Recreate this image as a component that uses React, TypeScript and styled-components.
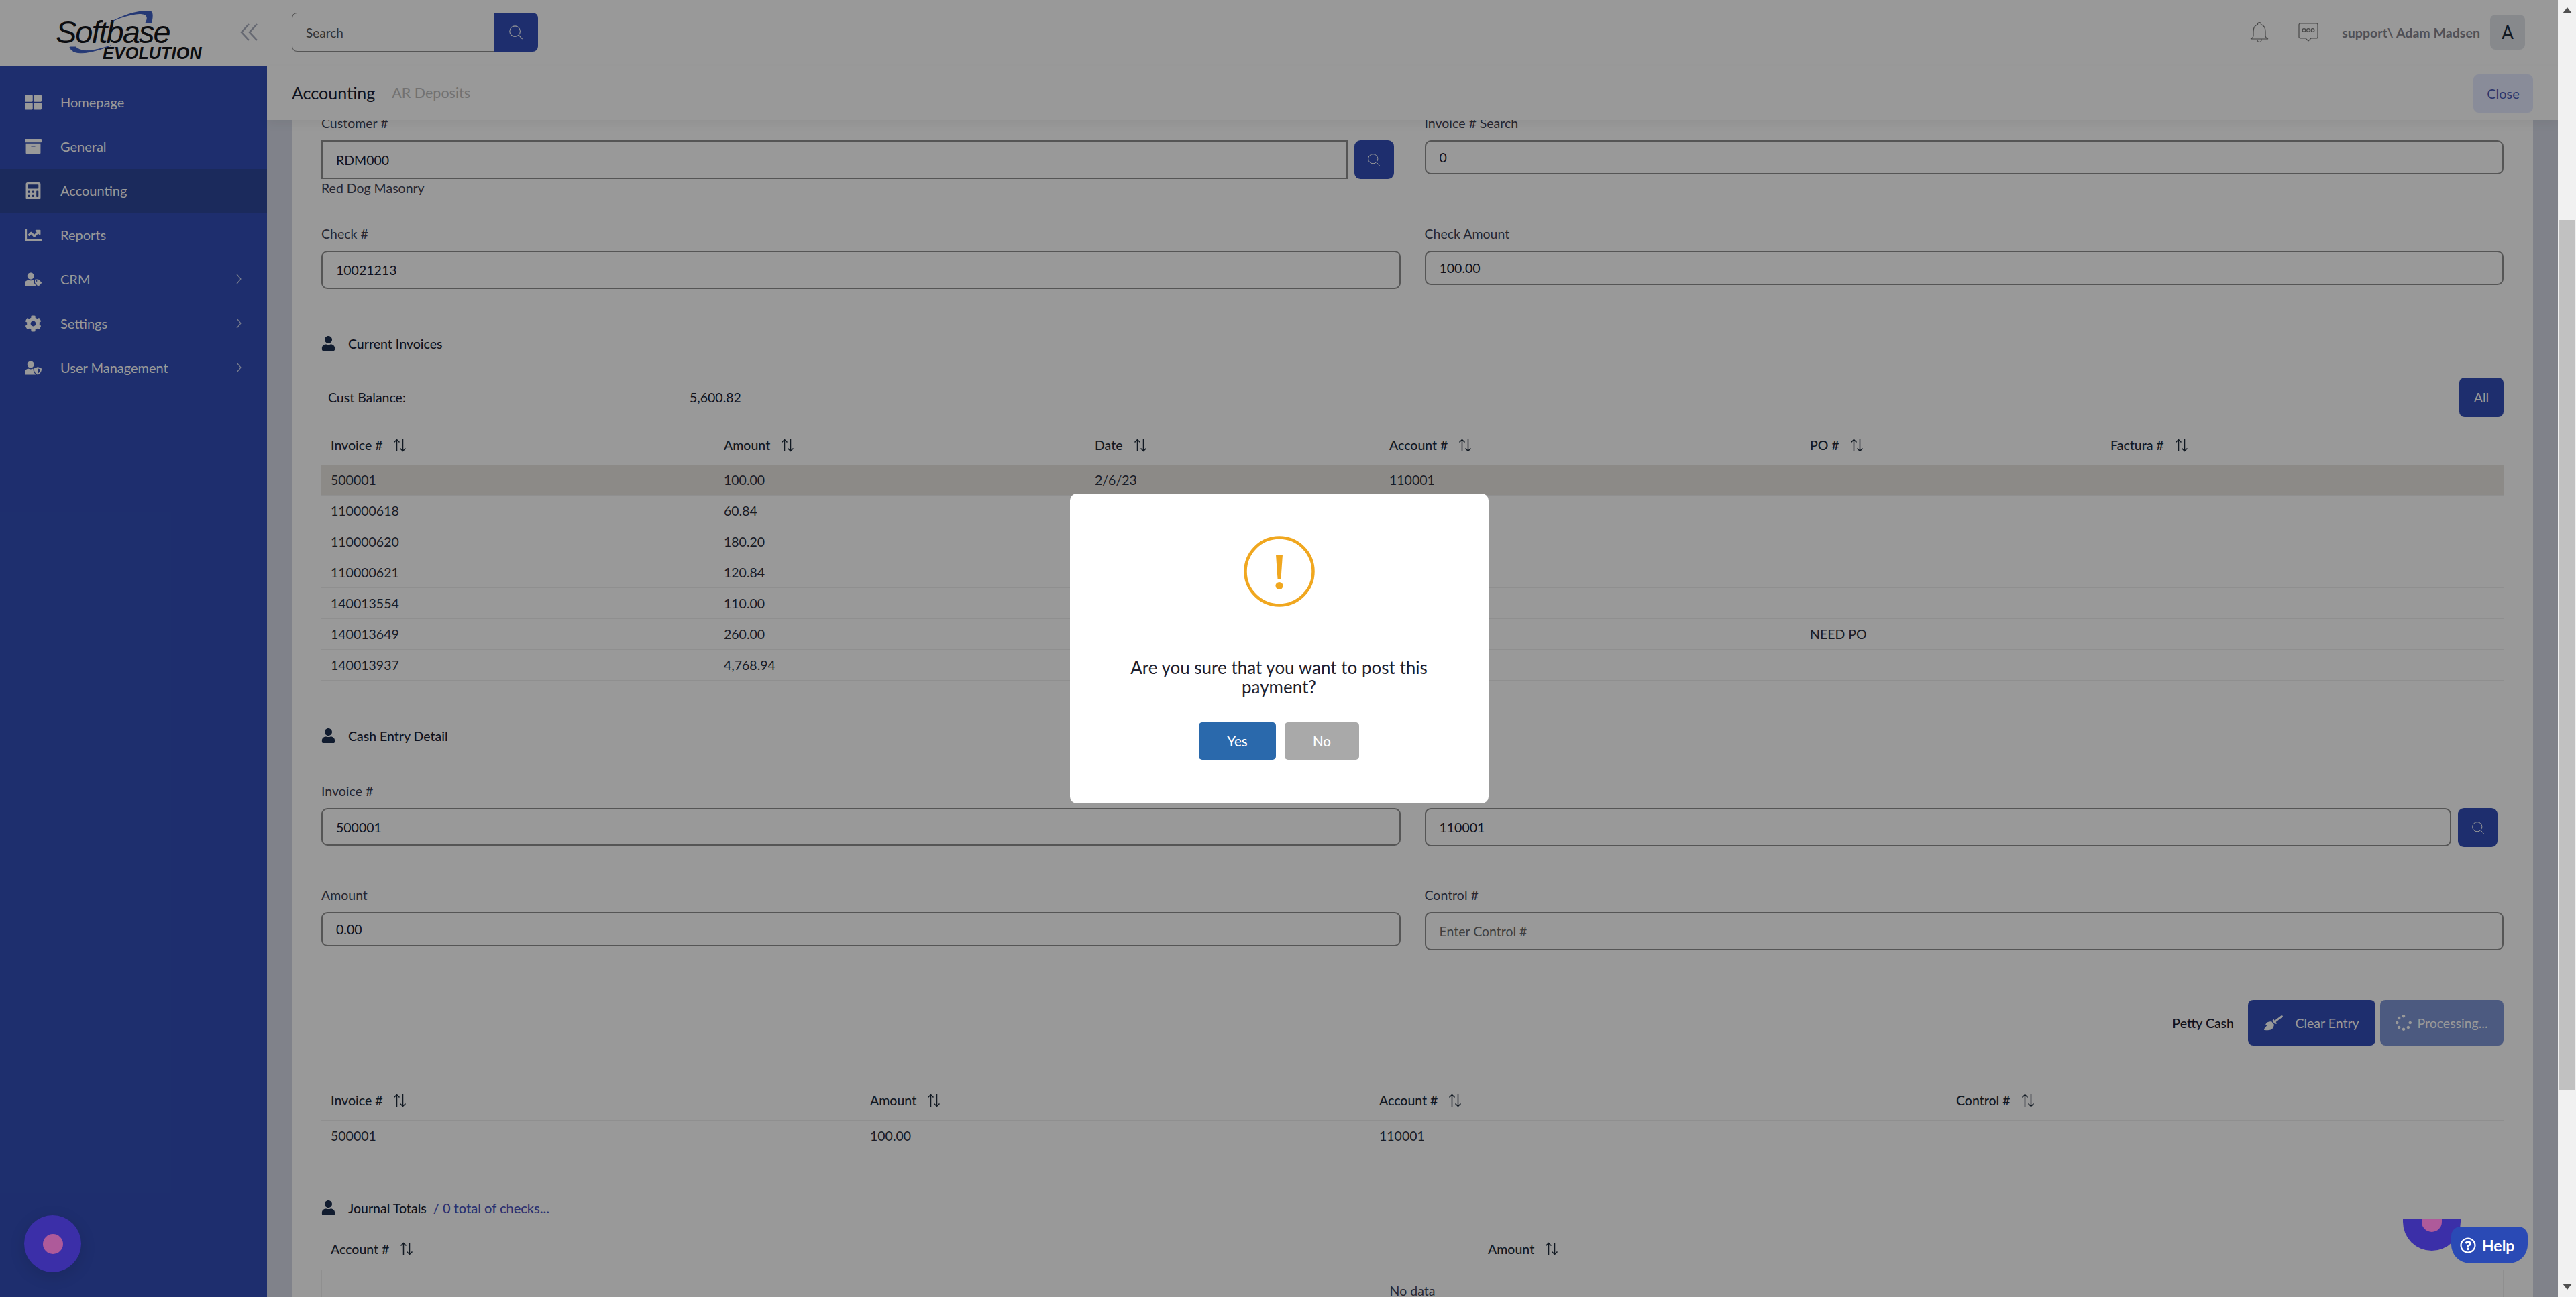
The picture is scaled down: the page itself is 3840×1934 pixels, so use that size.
import React from 'react';
import styled, { createGlobalStyle } from 'styled-components';
import {
  FaThLarge,
  FaArchive,
  FaCalculator,
  FaChartLine,
  FaUserTag,
  FaCog,
  FaUserShield,
  FaUser,
  FaBroom,
  FaSpinner,
  FaRegQuestionCircle,
} from 'react-icons/fa';

const NAVY = '#324eb7';
const FONT = 'Lato, "Noto Sans", "Liberation Sans", sans-serif';

const GlobalStyle = createGlobalStyle`
  html, body { margin: 0; padding: 0; height: 100%; overflow: hidden; }
  body { font-family: ${FONT}; background: #fff; }
  #root { height: 100%; }
  * { box-sizing: border-box; }
`;

const Page = styled.div`
  display: flex;
  width: 3840px;
  height: 1934px;
  overflow: hidden;
`;

const Frame = styled.div`
  position: relative;
  display: grid;
  grid-template-columns: 398px 1fr;
  width: 3813px;
  height: 100%;
  overflow: hidden;
  background: #fff;
`;

const ScrollTrack = styled.div`
  display: flex;
  flex-direction: column;
  align-items: center;
  width: 27px;
  height: 100%;
  background: #f1f1f1;
`;

const ScrollArrow = styled.div<{ $down?: boolean }>`
  width: 0;
  height: 0;
  margin-top: ${(p) => (p.$down ? 'auto' : '11px')};
  margin-bottom: ${(p) => (p.$down ? '11px' : '0')};
  border-left: 7px solid transparent;
  border-right: 7px solid transparent;
  ${(p) => (p.$down ? 'border-top: 9px solid #505050;' : 'border-bottom: 9px solid #505050;')}
`;

const ScrollThumb = styled.div`
  width: 23px;
  height: 1298px;
  margin-top: 308px;
  background: #c1c1c1;
`;

const Sidebar = styled.aside`
  display: flex;
  flex-direction: column;
  height: 100%;
`;

const LogoBar = styled.div`
  position: relative;
  display: flex;
  align-items: flex-start;
  height: 98px;
  padding-left: 83px;
  background: #fff;
`;

const LogoText = styled.div`
  display: flex;
  flex-direction: column;
  padding-top: 28px;
  color: #14161c;
  font-family: "Liberation Sans", sans-serif;
  font-style: italic;
`;

const LogoMain = styled.span`
  font-size: 47px;
  line-height: 40px;
  letter-spacing: -2px;
`;

const LogoSub = styled.span`
  margin-left: 70px;
  font-size: 25px;
  line-height: 22px;
  font-weight: 700;
  letter-spacing: 0.2px;
`;

const LogoSwoosh = styled.svg`
  position: absolute;
  left: 83px;
  top: 0;
`;

const Collapse = styled.svg`
  position: absolute;
  left: 358px;
  top: 34px;
`;

const Nav = styled.nav`
  flex: 1;
  padding-top: 22px;
  background: ${NAVY};
`;

const NavItem = styled.div<{ $active?: boolean }>`
  display: flex;
  align-items: center;
  height: 66px;
  padding: 0 38px 2px 37px;
  color: #fff;
  font-size: 20px;
  background: ${(p) => (p.$active ? '#2d4699' : 'transparent')};
`;

const NavIcon = styled.span`
  display: flex;
  align-items: center;
  width: 53px;
  font-size: 25px;
`;

const NavArrow = styled.svg`
  margin-left: auto;
  opacity: 0.75;
`;

const Main = styled.main`
  display: flex;
  flex-direction: column;
  min-width: 0;
  height: 100%;
`;

const TopBar = styled.header`
  display: flex;
  align-items: center;
  flex: none;
  height: 99px;
  padding: 0 49px 2px 37px;
  background: #fff;
  border-bottom: 1px solid #ececec;
`;

const SearchBox = styled.div`
  display: flex;
  width: 367px;
  height: 58px;
`;

const SearchInput = styled.input`
  width: 301px;
  height: 100%;
  padding: 0 20px;
  color: #3f4254;
  font-family: ${FONT};
  font-size: 19px;
  background: transparent;
  border: 1px solid #8e8e8e;
  border-right: none;
  border-radius: 8px 0 0 8px;
  &::placeholder { color: #555; opacity: 1; }
`;

const SearchButton = styled.div`
  display: flex;
  align-items: center;
  justify-content: center;
  width: 66px;
  color: #fff;
  background: ${NAVY};
  border-radius: 0 8px 8px 0;
`;

const UserArea = styled.div`
  display: flex;
  align-items: center;
  gap: 44px;
  margin-left: auto;
`;

const UserName = styled.span`
  margin: 0 15px 0 -9px;
  color: #858590;
  font-size: 19.6px;
  font-weight: 700;
`;

const UserBlock = styled.div`
  display: flex;
  align-items: center;
`;

const Avatar = styled.div`
  display: flex;
  align-items: center;
  justify-content: center;
  width: 52px;
  height: 52px;
  color: #1d2a3a;
  font-size: 26px;
  background: #e1e4e9;
  border-radius: 8px;
`;

const TitleBar = styled.div`
  position: relative;
  z-index: 1;
  display: flex;
  align-items: center;
  flex: none;
  height: 80px;
  padding: 0 37px;
  background: #fff;
  box-shadow: 0 6px 14px rgba(0, 0, 0, 0.05);
`;

const PageTitle = styled.span`
  margin-bottom: 3px;
  color: #181c32;
  font-size: 25px;
`;

const SubTitle = styled.span`
  margin-bottom: 3px;
  margin-left: 25px;
  color: #bdbdbd;
  font-size: 21.5px;
`;

const CloseButton = styled.div`
  display: flex;
  align-items: center;
  justify-content: center;
  width: 89px;
  height: 57px;
  margin-left: auto;
  color: #4b5bb5;
  font-size: 20px;
  background: #e4e9ff;
  border-radius: 8px;
`;

const ContentArea = styled.div`
  flex: 1;
  min-height: 0;
  padding: 0 37px;
  overflow: hidden;
  background: #d5d9e6;
`;

const Card = styled.section`
  min-height: 100%;
  margin-top: -7px;
  padding: 0 44px;
  background: #fff;
`;

const FormGrid = styled.div<{ $top: number }>`
  display: grid;
  grid-template-columns: 1fr 1fr;
  column-gap: 36px;
  align-items: start;
  margin-top: ${(p) => p.$top}px;
`;

const Field = styled.div`
  display: flex;
  flex-direction: column;
  min-width: 0;
`;

const Label = styled.label`
  margin-bottom: 13px;
  color: #3f4254;
  font-size: 19.5px;
  line-height: 24px;
`;

const InputRow = styled.div`
  display: flex;
  align-items: flex-start;
  gap: 10px;
`;

const Input = styled.input<{ $h: number; $square?: boolean }>`
  flex: 1 1 auto;
  width: 100%;
  min-width: 0;
  height: ${(p) => p.$h}px;
  padding: 0 20px;
  color: #181c32;
  font-family: ${FONT};
  font-size: 19.5px;
  background: transparent;
  border: 2px solid #8e8e8e;
  border-radius: ${(p) => (p.$square ? '0' : '9px')};
  &::placeholder { color: #6a6a6a; opacity: 1; }
`;

const IconButton = styled.div<{ $gapRight: number }>`
  display: flex;
  align-items: center;
  justify-content: center;
  flex: none;
  width: 59px;
  height: 58px;
  margin-right: ${(p) => p.$gapRight}px;
  color: #fff;
  background: ${NAVY};
  border-radius: 9px;
`;

const HelpText = styled.div`
  margin-top: 2px;
  color: #3f4254;
  font-size: 19.5px;
  line-height: 24px;
`;

const SectionHead = styled.div<{ $top: number }>`
  display: flex;
  align-items: center;
  gap: 19px;
  height: 24px;
  margin-top: ${(p) => p.$top}px;
  color: #181c32;
  font-size: 19.5px;
  font-weight: 500;
`;

const SectionIcon = styled.span`
  display: flex;
  width: 21px;
  color: #1d2f4f;
  font-size: 22px;
`;

const SectionLink = styled.span`
  margin-left: -9px;
  color: #4650bb;
  font-size: 20px;
`;

const BalanceRow = styled.div`
  display: flex;
  align-items: center;
  height: 59px;
  margin-top: 39px;
  padding-left: 10px;
  color: #181c32;
  font-size: 19.5px;
`;

const BalanceLabel = styled.span`
  width: 539px;
`;

const AllButton = styled.div`
  display: flex;
  align-items: center;
  justify-content: center;
  width: 66px;
  height: 59px;
  margin-left: auto;
  color: #fff;
  font-size: 19.5px;
  background: ${NAVY};
  border-radius: 8px;
`;

const TableHeader = styled.div<{ $cols: string; $top: number; $h: number; $line?: boolean }>`
  display: grid;
  grid-template-columns: ${(p) => p.$cols};
  align-items: center;
  height: ${(p) => p.$h}px;
  margin-top: ${(p) => p.$top}px;
  padding-bottom: 2px;
  color: #1d2a3a;
  font-size: 19.5px;
  font-weight: 500;
  border-bottom: ${(p) => (p.$line ? '1px solid #eee' : 'none')};
`;

const HeaderCell = styled.div`
  display: flex;
  align-items: center;
  gap: 16px;
  padding-left: 14px;
`;

const TableRow = styled.div<{ $cols: string; $selected?: boolean }>`
  display: grid;
  grid-template-columns: ${(p) => p.$cols};
  align-items: center;
  height: 46px;
  color: #2a2e3d;
  font-size: 19.5px;
  background: ${(p) => (p.$selected ? '#e9e6e1' : 'transparent')};
  border-bottom: 1px solid #eee;
`;

const TableCell = styled.div`
  padding-left: 14px;
`;

const ActionRow = styled.div`
  display: flex;
  align-items: center;
  justify-content: flex-end;
  gap: 7px;
  margin-top: 74px;
`;

const PettyCash = styled.span`
  margin-right: 14px;
  color: #181c32;
  font-size: 19.5px;
  font-weight: 500;
`;

const ActionButton = styled.div<{ $w: number; $busy?: boolean }>`
  display: flex;
  align-items: center;
  justify-content: center;
  gap: ${(p) => (p.$busy ? '8px' : '18px')};
  width: ${(p) => p.$w}px;
  height: 68px;
  color: #fff;
  font-size: 19.5px;
  background: ${(p) => (p.$busy ? '#7f96d5' : NAVY)};
  border-radius: 8px;
`;

const EmptyBody = styled.div`
  height: 60px;
  padding-top: 19px;
  color: #3f4254;
  font-size: 19.5px;
  line-height: 24px;
  text-align: center;
  border-left: 1px solid #eee;
  border-right: 1px solid #eee;
`;

const Overlay = styled.div`
  position: absolute;
  inset: 0;
  z-index: 5;
  display: flex;
  align-items: center;
  justify-content: center;
  background: rgba(0, 0, 0, 0.4);
`;

const Modal = styled.div`
  display: flex;
  flex-direction: column;
  align-items: center;
  width: 624px;
  height: 462px;
  padding-top: 63px;
  background: #fff;
  border-radius: 10px;
`;

const Message = styled.div`
  width: 480px;
  margin-top: 76px;
  color: #1e1e2d;
  font-size: 26px;
  line-height: 29px;
  text-align: center;
`;

const ModalActions = styled.div`
  display: flex;
  gap: 13px;
  margin-top: 38px;
`;

const ModalButton = styled.div<{ $w: number; $bg: string }>`
  display: flex;
  align-items: center;
  justify-content: center;
  width: ${(p) => p.$w}px;
  height: 56px;
  color: #fff;
  font-size: 20.5px;
  font-weight: 500;
  background: ${(p) => p.$bg};
  border-radius: 5px;
`;

const ChatBubble = styled.div`
  position: absolute;
  left: 36px;
  top: 1812px;
  z-index: 6;
  display: flex;
  align-items: center;
  justify-content: center;
  width: 85px;
  height: 85px;
  background: #3b2fa8;
  border-radius: 50%;
  box-shadow: 0 6px 24px rgba(0, 0, 0, 0.12);
`;

const BubbleDot = styled.div`
  width: 30px;
  height: 30px;
  background: #ae5a9a;
  border-radius: 50%;
`;

const ClippedBubble = styled.div`
  position: absolute;
  left: 3582px;
  top: 1817px;
  z-index: 6;
  display: flex;
  align-items: flex-end;
  justify-content: center;
  width: 86px;
  height: 48px;
  overflow: hidden;
  background: #3b2fa8;
  border-radius: 0 0 43px 43px;
`;

const ClippedDot = styled.div`
  width: 30px;
  height: 20px;
  margin-bottom: 28px;
  background: #ae5a9a;
  border-radius: 0 0 15px 15px;
`;

const HelpPill = styled.div`
  position: absolute;
  left: 3654px;
  top: 1829px;
  z-index: 7;
  display: flex;
  align-items: center;
  gap: 9px;
  width: 114px;
  height: 55px;
  padding-left: 13px;
  color: #fff;
  font-size: 23px;
  font-weight: 700;
  background: #2a4ab5;
  border-radius: 14px 14px 28px 28px;
`;

const SearchGlyph = ({ size = 22 }: { size?: number }) => (
  <svg width={size} height={size} viewBox="0 0 24 24" fill="none" stroke="currentColor" strokeWidth="1.2">
    <circle cx="10.5" cy="10.5" r="8.5" />
    <path d="M16.5 16.5L22.5 23" />
  </svg>
);

const SortGlyph = () => (
  <svg width="20" height="20" viewBox="0 0 20 20" fill="none" stroke="currentColor" strokeWidth="1.5">
    <path d="M5.5 19V1.5M1.5 5.5L5.5 1.5L9.5 5.5" />
    <path d="M14.5 1V18.5M10.5 14.5L14.5 18.5L18.5 14.5" />
  </svg>
);

const Swooshes = () => (
  <LogoSwoosh width="230" height="98" viewBox="0 0 230 98">
    <path d="M80 34C100 22 122 15 140 16C145 17 146 22 143 35L133 35C139 25 135 21 125 21C110 22 95 27 80 34Z" fill="#3f5fc4" />
    <path d="M21 70C24 80 40 84 82 68C55 77 38 78 30 70Z" fill="#3f5fc4" stroke="#3f5fc4" strokeWidth="1" />
  </LogoSwoosh>
);

const BellGlyph = () => (
  <svg width="28" height="32" viewBox="0 0 28 32" fill="none" stroke="#777" strokeWidth="1.2">
    <path d="M14 1.5a2.5 2.5 0 0 1 2.5 2.5v.6C21 6 23 10 23 15v6c0 2 2 4 4 5H1c2-1 4-3 4-5v-6c0-5 2-9 6.5-10.4V4A2.5 2.5 0 0 1 14 1.5Z" />
    <path d="M10.5 26.5c.5 2.5 2 4 3.5 4s3-1.500 3.500-4" />
  </svg>
);

const ChatGlyph = () => (
  <svg width="30" height="28" viewBox="0 0 30 28" fill="none" stroke="#777" strokeWidth="1.2">
    <path d="M3 1h24a2 2 0 0 1 2 2v18a2 2 0 0 1-2 2h-8l-4 4-4-4H3a2 2 0 0 1-2-2V3a2 2 0 0 1 2-2Z" />
    <circle cx="8.500" cy="11" r="2.400" />
    <circle cx="15" cy="11" r="2.400" />
    <circle cx="21.500" cy="11" r="2.400" />
  </svg>
);

const WarningGlyph = () => (
  <svg width="106" height="106" viewBox="0 0 106 106">
    <circle cx="53" cy="53" r="50.500" fill="none" stroke="#f0a71f" strokeWidth="4.500" />
    <path d="M48 28H58L55.500 64H50.500Z" fill="#f0a71f" />
    <circle cx="53" cy="74.500" r="5.500" fill="#f0a71f" />
  </svg>
);

const navItems = [
  { label: 'Homepage', icon: <FaThLarge /> },
  { label: 'General', icon: <FaArchive /> },
  { label: 'Accounting', icon: <FaCalculator />, active: true },
  { label: 'Reports', icon: <FaChartLine /> },
  { label: 'CRM', icon: <FaUserTag />, more: true },
  { label: 'Settings', icon: <FaCog />, more: true },
  { label: 'User Management', icon: <FaUserShield />, more: true },
];

const invoiceCols = '586px 553px 439px 627px 448px 1fr';
const invoiceHead = ['Invoice #', 'Amount', 'Date', 'Account #', 'PO #', 'Factura #'];
const invoices = [
  ['500001', '100.00', '2/6/23', '110001', '', ''],
  ['110000618', '60.84', '', '', '', ''],
  ['110000620', '180.20', '', '', '', ''],
  ['110000621', '120.84', '', '', '', ''],
  ['140013554', '110.00', '', '', '', ''],
  ['140013649', '260.00', '', '', 'NEED PO', ''],
  ['140013937', '4,768.94', '', '', '', ''],
];

const entryCols = '804px 759px 860px 1fr';
const journalCols = '1725px 1fr';

function HeadCells({ names }: { names: string[] }) {
  return (
    <>
      {names.map((name) => (
        <HeaderCell key={name}>
          {name}
          <SortGlyph />
        </HeaderCell>
      ))}
    </>
  );
}

export default function App() {
  return (
    <Page>
      <GlobalStyle />
      <Frame>
        <Sidebar>
          <LogoBar>
            <LogoText>
              <LogoMain>Softbase</LogoMain>
              <LogoSub>EVOLUTION</LogoSub>
            </LogoText>
            <Swooshes />
            <Collapse width="27" height="28" viewBox="0 0 27 28" fill="none" stroke="#a9adbd" strokeWidth="2.500">
              <path d="M13 2L2 14L13 26" />
              <path d="M25 2L14 14L25 26" />
            </Collapse>
          </LogoBar>
          <Nav>
            {navItems.map((item) => (
              <NavItem key={item.label} $active={item.active}>
                <NavIcon>{item.icon}</NavIcon>
                {item.label}
                {item.more && (
                  <NavArrow width="8" height="16" viewBox="0 0 8 16" fill="none" stroke="currentColor" strokeWidth="1.2">
                    <path d="M1 1L7 8L1 15" />
                  </NavArrow>
                )}
              </NavItem>
            ))}
          </Nav>
        </Sidebar>

        <Main>
          <TopBar>
            <SearchBox>
              <SearchInput placeholder="Search" readOnly />
              <SearchButton>
                <SearchGlyph />
              </SearchButton>
            </SearchBox>
            <UserArea>
              <BellGlyph />
              <ChatGlyph />
              <UserBlock>
                <UserName>support\ Adam Madsen</UserName>
                <Avatar>A</Avatar>
              </UserBlock>
            </UserArea>
          </TopBar>
          <TitleBar>
            <PageTitle>Accounting</PageTitle>
            <SubTitle>AR Deposits</SubTitle>
            <CloseButton>Close</CloseButton>
          </TitleBar>
          <ContentArea>
            <Card>
              <FormGrid $top={0}>
                <Field>
                  <Label>Customer #</Label>
                  <InputRow>
                    <Input $h={58} $square readOnly value="RDM000" />
                    <IconButton $gapRight={10}>
                      <SearchGlyph size={20} />
                    </IconButton>
                  </InputRow>
                  <HelpText>Red Dog Masonry</HelpText>
                </Field>
                <Field>
                  <Label>Invoice # Search</Label>
                  <Input $h={51} readOnly value="0" />
                </Field>
              </FormGrid>
              <FormGrid $top={44}>
                <Field>
                  <Label>Check #</Label>
                  <Input $h={57} readOnly value="10021213" />
                </Field>
                <Field>
                  <Label>Check Amount</Label>
                  <Input $h={51} readOnly value="100.00" />
                </Field>
              </FormGrid>

              <SectionHead $top={69}>
                <SectionIcon>
                  <FaUser />
                </SectionIcon>
                Current Invoices
              </SectionHead>
              <BalanceRow>
                <BalanceLabel>Cust Balance:</BalanceLabel>
                5,600.82
                <AllButton>All</AllButton>
              </BalanceRow>
              <TableHeader $cols={invoiceCols} $top={14} $h={57}>
                <HeadCells names={invoiceHead} />
              </TableHeader>
              {invoices.map((row, i) => (
                <TableRow key={row[0]} $cols={invoiceCols} $selected={i === 0}>
                  {row.map((cell, j) => (
                    <TableCell key={j}>{cell}</TableCell>
                  ))}
                </TableRow>
              ))}

              <SectionHead $top={70}>
                <SectionIcon>
                  <FaUser />
                </SectionIcon>
                Cash Entry Detail
              </SectionHead>
              <FormGrid $top={59}>
                <Field>
                  <Label>Invoice #</Label>
                  <Input $h={56} readOnly value="500001" />
                </Field>
                <Field>
                  <Label>Account #</Label>
                  <InputRow>
                    <Input $h={57} readOnly value="110001" />
                    <IconButton $gapRight={9}>
                      <SearchGlyph size={20} />
                    </IconButton>
                  </InputRow>
                </Field>
              </FormGrid>
              <FormGrid $top={60}>
                <Field>
                  <Label>Amount</Label>
                  <Input $h={51} readOnly value="0.00" />
                </Field>
                <Field>
                  <Label>Control #</Label>
                  <Input $h={57} readOnly placeholder="Enter Control #" />
                </Field>
              </FormGrid>

              <ActionRow>
                <PettyCash>Petty Cash</PettyCash>
                <ActionButton $w={190}>
                  <FaBroom size={28} />
                  Clear Entry
                </ActionButton>
                <ActionButton $w={184} $busy>
                  <FaSpinner size={24} />
                  Processing...
                </ActionButton>
              </ActionRow>

              <TableHeader $cols={entryCols} $top={54} $h={58} $line>
                <HeadCells names={['Invoice #', 'Amount', 'Account #', 'Control #']} />
              </TableHeader>
              <TableRow $cols={entryCols}>
                <TableCell>500001</TableCell>
                <TableCell>100.00</TableCell>
                <TableCell>110001</TableCell>
                <TableCell />
              </TableRow>

              <SectionHead $top={72}>
                <SectionIcon>
                  <FaUser />
                </SectionIcon>
                Journal Totals
                <SectionLink>/ 0 total of checks...</SectionLink>
              </SectionHead>
              <TableHeader $cols={journalCols} $top={20} $h={61} $line>
                <HeadCells names={['Account #', 'Amount']} />
              </TableHeader>
              <EmptyBody>No data</EmptyBody>
            </Card>
          </ContentArea>
        </Main>

        <Overlay>
          <Modal>
            <WarningGlyph />
            <Message>Are you sure that you want to post this payment?</Message>
            <ModalActions>
              <ModalButton $w={115} $bg="#2a69ac">
                Yes
              </ModalButton>
              <ModalButton $w={111} $bg="#a9a9a9">
                No
              </ModalButton>
            </ModalActions>
          </Modal>
        </Overlay>

        <ChatBubble>
          <BubbleDot />
        </ChatBubble>
        <ClippedBubble>
          <ClippedDot />
        </ClippedBubble>
        <HelpPill>
          <FaRegQuestionCircle size={24} />
          Help
        </HelpPill>
      </Frame>
      <ScrollTrack>
        <ScrollArrow />
        <ScrollThumb />
        <ScrollArrow $down />
      </ScrollTrack>
    </Page>
  );
}
